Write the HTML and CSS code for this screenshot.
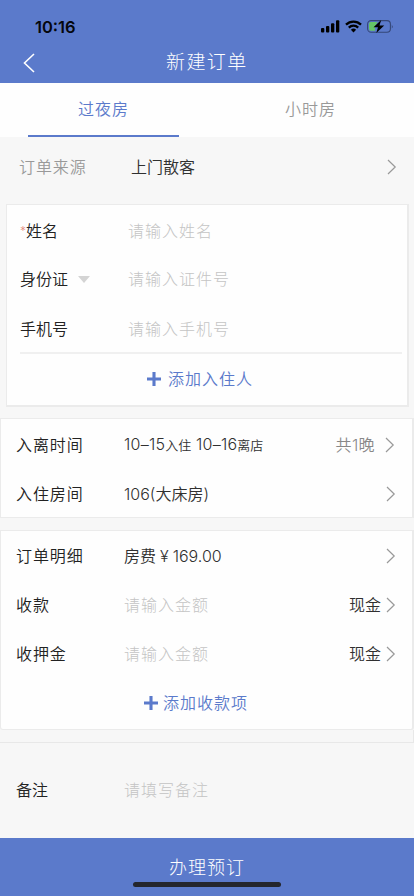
FILE: index.html
```html
<!DOCTYPE html>
<html lang="zh-CN">
<head>
<meta charset="utf-8">
<meta name="viewport" content="width=device-width, initial-scale=1">
<title>新建订单</title>
<link rel="stylesheet" href="styles.css">
</head>
<body>
<svg class="defs" aria-hidden="true">
  <symbol id="arrow" viewBox="0 0 10 16"><path d="M1 1l7.2 7L1 15" fill="none" stroke="currentColor" stroke-width="1.2"/></symbol>
  <symbol id="plus" viewBox="0 0 14 14"><path d="M7 0v14M0 7h14" fill="none" stroke="currentColor" stroke-width="3.1"/></symbol>
</svg>
<header class="header">
  <div class="status">
    <span class="clock">10:16</span>
    <div class="status-icons">
      <svg width="19" height="13" viewBox="0 0 19 13"><rect x="0" y="8" width="3.3" height="4.5" rx="1"/><rect x="5" y="6" width="3.3" height="6.5" rx="1"/><rect x="10" y="3.3" width="3.3" height="9.2" rx="1"/><rect x="15" y=".3" width="3.3" height="12.2" rx="1"/></svg>
      <svg width="17" height="13" viewBox="0 0 17 13"><path d="M1 4.6a10.8 10.8 0 0 1 15 0M3.8 7.6a6.8 6.8 0 0 1 9.4 0" fill="none" stroke="#000" stroke-width="2.3"/><path d="M5.9 9.7a3.9 3.9 0 0 1 5.2 0L8.500 12.400z"/></svg>
      <svg width="27" height="13" viewBox="0 0 27 13"><rect x=".6" y=".6" width="22.800" height="11.600" rx="3.500" fill="none" stroke="#354778" stroke-width="1.100"/><path d="M4 2h6.500L8 6.500v4.300H4A2 2 0 0 1 2 8.800V4a2 2 0 0 1 2-2z" fill="#65c466"/><path d="M24.800 4.500q1.700 2 0 4z" fill="#354778"/><path d="M14.200 0L6.500 7.300h4.500L9.300 13l7.900-7.400h-4.700z"/></svg>
    </div>
  </div>
  <div class="nav">
    <svg class="back" width="12" height="20" viewBox="0 0 12 20"><path d="M11 1L1.500 10 11 19" fill="none" stroke="#fff" stroke-width="1.600"/></svg>
    <h1 class="title">新建订单</h1>
  </div>
</header>
<nav class="tabs">
  <div class="tab active"><span>过夜房</span></div>
  <div class="tab"><span>小时房</span></div>
</nav>
<main>
  <div class="row source">
    <span class="label spaced">订单来源</span><span class="value">上门散客</span>
    <svg class="arrow"><use href="#arrow"/></svg>
  </div>
  <section class="card guest">
    <div class="row"><span class="label"><i class="star">*</i>姓名</span><span class="hint">请输入姓名</span></div>
    <div class="row id"><span class="label">身份证<i class="caret"></i></span><span class="hint">请输入证件号</span></div>
    <div class="row phone"><span class="label">手机号</span><span class="hint">请输入手机号</span></div>
    <div class="add"><svg class="plus"><use href="#plus"/></svg>添加入住人</div>
  </section>
  <section class="card wide stay">
    <div class="row"><span class="label spaced">入离时间</span><span class="value dates">10–15<small>入住</small> 10–16<small>离店</small></span><span class="nights">共1晚</span><svg class="arrow"><use href="#arrow"/></svg></div>
    <div class="row"><span class="label spaced">入住房间</span><span class="value">106(大床房)</span><svg class="arrow"><use href="#arrow"/></svg></div>
  </section>
  <section class="card wide bill">
    <div class="row"><span class="label spaced">订单明细</span><span class="value">房费<span class="yen">¥</span>169.00</span><svg class="arrow"><use href="#arrow"/></svg></div>
    <div class="row"><span class="label spaced">收款</span><span class="hint">请输入金额</span><span class="method">现金</span><svg class="arrow"><use href="#arrow"/></svg></div>
    <div class="row"><span class="label spaced">收押金</span><span class="hint">请输入金额</span><span class="method">现金</span><svg class="arrow"><use href="#arrow"/></svg></div>
    <div class="add"><svg class="plus"><use href="#plus"/></svg>添加收款项</div>
  </section>
  <div class="gap"></div>
  <div class="row remark"><span class="label">备注</span><span class="hint">请填写备注</span></div>
</main>
<footer class="submit"><span>办理预订</span><i class="home"></i></footer>
</body>
</html>
```
FILE: styles.css
```css
* { box-sizing: border-box; }
body {
  margin: 0;
  width: 414px;
  height: 896px;
  overflow: hidden;
  display: flex;
  flex-direction: column;
  background: #f7f7f7;
  color: #303030;
  font: 350 16px/24px Inter, "Noto Sans CJK SC", sans-serif;
  white-space: nowrap;
}
i { font-style: normal; }
svg { display: block; flex: none; }
.defs { position: absolute; width: 0; height: 0; }

.header { height: 83px; background: #5b7acb; }
.status { height: 44px; padding: 9px 20px 0 35px; display: flex; justify-content: space-between; }
.clock { color: #05070d; font-size: 16.5px; font-weight: 600; line-height: 36px; }
.status-icons { display: flex; gap: 5px; padding-top: 11px; }
.nav { height: 39px; display: grid; grid-template-columns: 143px 1fr; padding-left: 23px; }
.back { margin-top: 9px; }
.title { margin: 0; color: #fff; font-size: 19px; font-weight: 300; letter-spacing: 1.4px; line-height: 37px; }

.tabs { height: 54px; display: grid; grid-template-columns: 1fr 1fr; background: #fefefe; }
.tab { display: flex; justify-content: center; color: #999; letter-spacing: 1px; line-height: 52px; }
.tab.active { color: #5b7acb; border-bottom: 2px solid #5b7acb; margin: 0 28px; }

main { flex: 1; }
.row { height: 49px; display: flex; align-items: center; }
.label { width: 108px; flex: none; color: #222; display: flex; align-items: center; }
.spaced { letter-spacing: .9px; }
.value, .hint { flex: 1; }
.hint { color: #c4c4c4; letter-spacing: 1px; font-weight: 300; }
.arrow { width: 10px; height: 16px; color: #999; }

.source { height: 67px; padding: 0 17px 8px 19px; }
.source .label { width: 112px; color: #999; }

.card { background: #fefefe; border: 1px solid #ebebeb; }
.guest { height: 203px; margin: 0 5px 0 6px; padding: 2px 5px 0 13px; border-right-width: 2px; border-bottom-width: 2px; }
.guest .row { height: 48px; }
.guest .phone { height: 51px; padding-top: 2px; border-bottom: 2px solid #f0f0f0; }
.guest .add { padding-left: 127px; height: 50px; }
.star { color: #e58a7b; font-size: 12px; width: 6px; }
.caret { border: 6px solid transparent; border-top: 7px solid #d4d4d4; border-bottom: 0; margin-left: 10px; }
.add { display: flex; align-items: center; color: #5b7acb; letter-spacing: 1px; height: 49px; }
.plus { width: 14px; height: 14px; margin-right: 7px; }

.wide { margin-right: 0; border-right-width: 2px; padding: 0 16px 0 15px; }
.stay { height: 100px; margin-top: 11px; padding-top: 1px; }
.bill { height: 200px; margin-top: 12px; border-radius: 0 0 3px 3px; }
.dates { letter-spacing: .25px; }
.dates small { font-size: 13px; letter-spacing: 0; }
.nights { color: #888; letter-spacing: .4px; margin-right: 10px; }
.nights + .arrow { margin-right: 1px; }
.method { margin-right: 5px; }
.yen { margin: 0 4px; }
.bill .add { padding-left: 128px; }
.bill .plus { margin-right: 5px; }

.gap { height: 13px; border-bottom: 1px solid #e8e8e8; border-right: 1px solid #e8e8e8; }
.remark { height: 95px; padding: 0 0 2px 16px; }

.submit { position: relative; height: 58px; background: #5b7acb; color: #fff; font-size: 18px; font-weight: 300; letter-spacing: 1px; line-height: 59px; text-align: center; }
.home { position: absolute; left: 133px; top: 44px; width: 148px; height: 5px; border-radius: 3px; background: #24262d; }
```
